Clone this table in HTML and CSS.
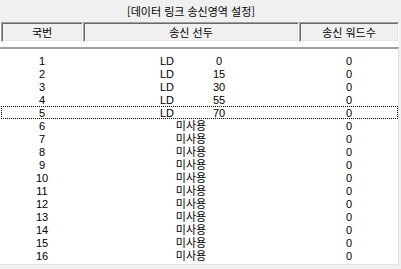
FILE: index.html
```
<!DOCTYPE html>
<html lang="ko">
<head>
<meta charset="utf-8">
<link rel="stylesheet" href="styles.css">
</head>
<body>
<div class="title">[데이터 링크 송신영역 설정]</div>
<div class="header">
  <div class="hcell c1">국번</div>
  <div class="hcell c2">송신 선두</div>
  <div class="hcell c3">송신 워드수</div>
</div>
<div class="gap"></div>
<div class="list">
  <div class="row"><span class="c1">1</span><span class="c2 ld"><span class="dev">LD</span><span class="num">0</span></span><span class="c3">0</span></div>
  <div class="row"><span class="c1">2</span><span class="c2 ld"><span class="dev">LD</span><span class="num">15</span></span><span class="c3">0</span></div>
  <div class="row"><span class="c1">3</span><span class="c2 ld"><span class="dev">LD</span><span class="num">30</span></span><span class="c3">0</span></div>
  <div class="row"><span class="c1">4</span><span class="c2 ld"><span class="dev">LD</span><span class="num">55</span></span><span class="c3">0</span></div>
  <div class="row focus"><span class="c1">5</span><span class="c2 ld"><span class="dev">LD</span><span class="num">70</span></span><span class="c3">0</span></div>
  <div class="row"><span class="c1">6</span><span class="c2 unused">미사용</span><span class="c3">0</span></div>
  <div class="row"><span class="c1">7</span><span class="c2 unused">미사용</span><span class="c3">0</span></div>
  <div class="row"><span class="c1">8</span><span class="c2 unused">미사용</span><span class="c3">0</span></div>
  <div class="row"><span class="c1">9</span><span class="c2 unused">미사용</span><span class="c3">0</span></div>
  <div class="row"><span class="c1">10</span><span class="c2 unused">미사용</span><span class="c3">0</span></div>
  <div class="row"><span class="c1">11</span><span class="c2 unused">미사용</span><span class="c3">0</span></div>
  <div class="row"><span class="c1">12</span><span class="c2 unused">미사용</span><span class="c3">0</span></div>
  <div class="row"><span class="c1">13</span><span class="c2 unused">미사용</span><span class="c3">0</span></div>
  <div class="row"><span class="c1">14</span><span class="c2 unused">미사용</span><span class="c3">0</span></div>
  <div class="row"><span class="c1">15</span><span class="c2 unused">미사용</span><span class="c3">0</span></div>
  <div class="row"><span class="c1">16</span><span class="c2 unused">미사용</span><span class="c3">0</span></div>
</div>
</body>
</html>
```
FILE: styles.css
```
html, body {
  margin: 0;
  padding: 0;
  background: #f0f0f0;
  width: 401px;
  height: 269px;
  overflow: hidden;
}
body {
  font-family: "Liberation Sans", "Noto Sans CJK KR", sans-serif;
  font-size: 11px;
  color: #000;
}
.title {
  box-sizing: border-box;
  height: 22px;
  margin-left: 83px;
  width: 216px;
  text-align: center;
  padding-top: 4px;
  line-height: 14px;
  font-family: "Noto Sans CJK KR", "Liberation Sans", sans-serif;
}
.header {
  display: flex;
  height: 20px;
  padding-left: 1px;
  background: #fff;
  width: 398px;
}
.hcell {
  box-sizing: border-box;
  height: 20px;
  background: #f0f0f0;
  border-top: 1px solid #a0a0a0;
  border-left: 1px solid #a0a0a0;
  border-right: 1px solid #fff;
  border-bottom: 1px solid #fff;
  box-shadow: inset 1px 1px #696969, inset -1px -1px #e3e3e3;
  text-align: center;
  line-height: 17px;
  padding-top: 1px;
  font-family: "Noto Sans CJK KR", "Liberation Sans", sans-serif;
}
.header .c1 { width: 82px; }
.header .c2 { width: 216px; }
.header .c3 { width: 100px; }
.gap {
  height: 5px;
  width: 399px;
  background: #fff;
}
.list {
  box-sizing: border-box;
  width: 399px;
  background: #fff;
  border-top: 2px solid #a0a0a0;
  border-right: 1px solid #e3e3e3;
  border-bottom: 1px solid #e3e3e3;
  padding: 5px 0 2px 1px;
}
.row {
  display: grid;
  grid-template-columns: 82px 216px 100px;
  height: 13px;
  line-height: 13px;
  width: 397px;
}
.row > span {
  display: block;
  height: 13px;
  text-align: center;
  white-space: nowrap;
  padding-top: 1px;
  box-sizing: border-box;
}
.row.focus {
  outline: 1px dotted #000;
  outline-offset: -1px;
}
.ld {
  display: flex !important;
  padding-left: 77px;
}
.dev {
  width: 47px;
  text-align: left;
}
.num {
  width: 24px;
  text-align: center;
}
.unused {
  line-height: 12px;
}
```
